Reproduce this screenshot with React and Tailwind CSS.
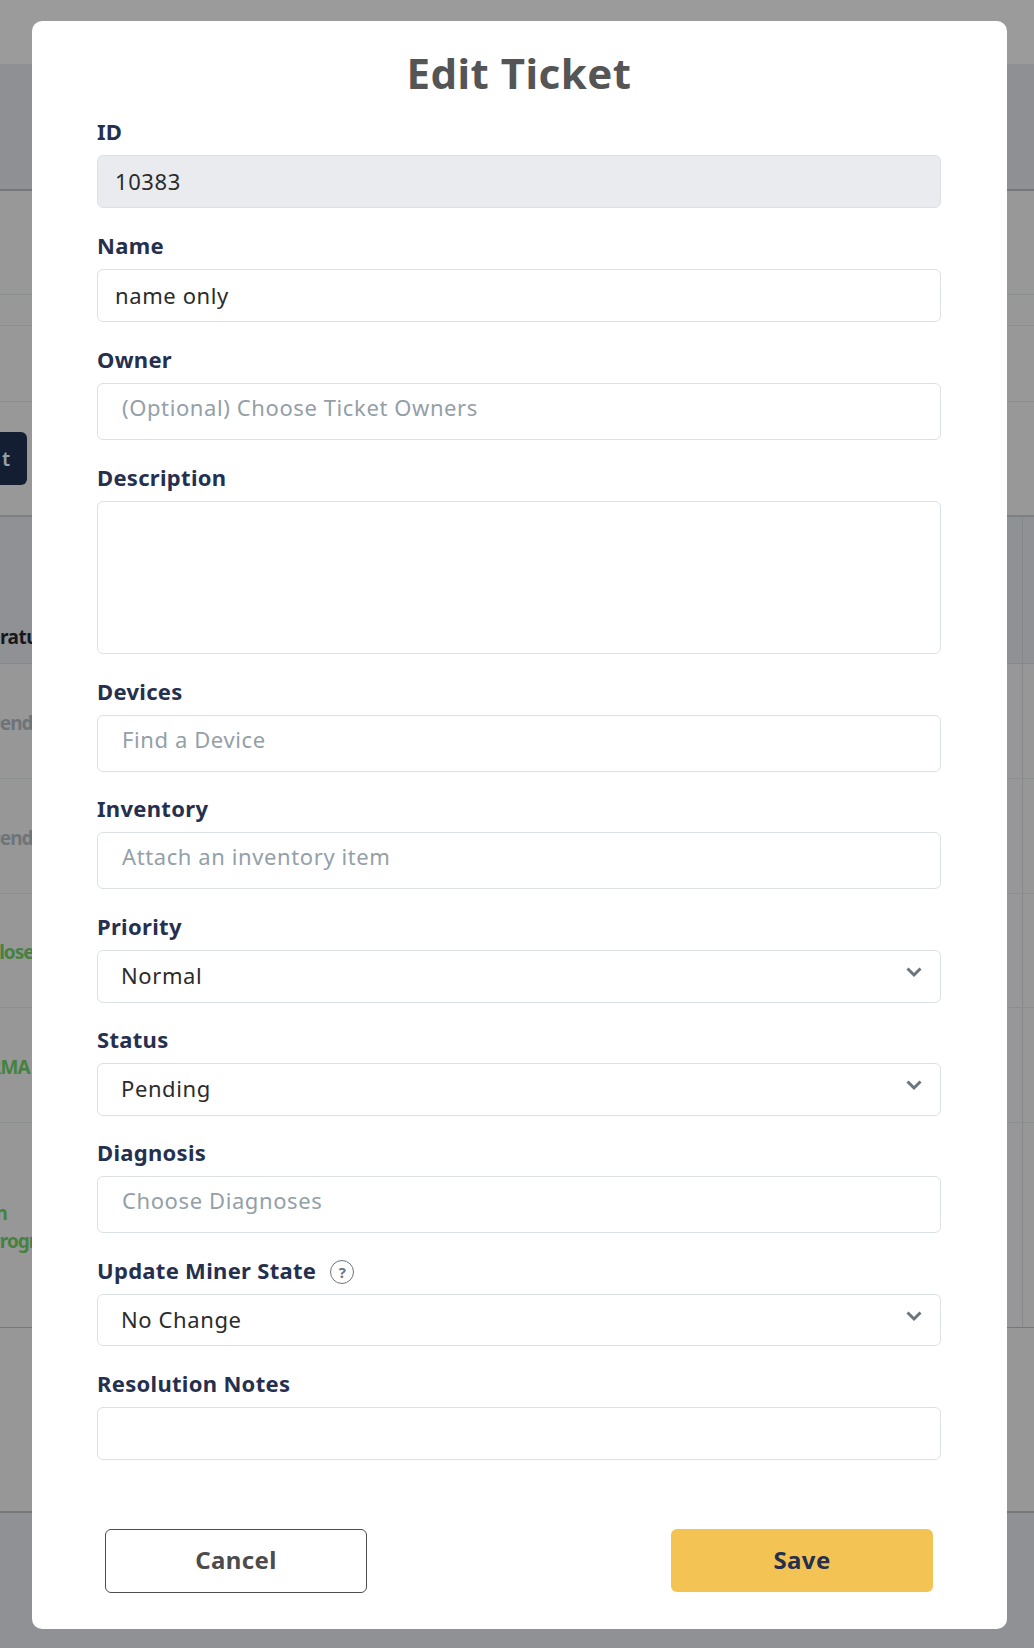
const boxCls = "w-full rounded-[6px] border border-[#dbe2e6] text-[22px] tracking-[0.6px]";

function Field({ label, value, placeholder, h, mt, gray, select, help, textCls = "pl-[17px]", valueCls = "mb-[2px]" }) {
  return (
    <div className={mt}>
      <label className="flex items-center h-[24px] text-[22px] leading-[24px] font-bold tracking-[0.3px] text-[#25304f]">
        {label}
        {help && (
          <span className="ml-[14px] mt-[4px] flex h-[24px] w-[24px] items-center justify-center rounded-full border border-[#6c757d] text-[15px] font-bold tracking-normal text-[#6c757d]">?</span>
        )}
      </label>
      <div className={`${boxCls} ${h} ${gray ? "bg-[#e9ebef]" : "bg-white"} mt-[12px] relative flex items-center ${textCls}`}>
        {value && <span className={`text-[#2b2b2b] ${valueCls}`}>{value}</span>}
        {placeholder && <span className="-mt-[8px] text-[#93a0a8]">{placeholder}</span>}
        {select && (
          <svg className="absolute right-[18px] top-[15px]" width="16" height="12" viewBox="0 0 16 12" fill="none">
            <path d="M1.5 2.5 L8 9 L14.5 2.5" stroke="#6c757d" strokeWidth="3" />
          </svg>
        )}
      </div>
    </div>
  );
}

function Row({ h, children, cls = "", line = "border-[#8a8e8c]" }) {
  return (
    <div className={`flex ${h} border-b ${line} ${cls}`}>
      <div className="flex flex-1 flex-col justify-center pt-[3px] text-[19px] leading-[28px] font-bold tracking-[-1px] whitespace-nowrap">{children}</div>
      <div className="w-[12px] border-l border-[#84888a]" />
    </div>
  );
}

export default function App() {
  return (
    <div className="relative w-[1034px] h-[1648px] overflow-hidden bg-[#8f9194] font-['Noto_Sans','Liberation_Sans',sans-serif]">
      <div className="h-[64px] bg-[#9b9b9b]" />
      <div className="h-[127px] border-b-2 border-[#74787d] bg-[#8e9093]" />
      <div className="h-[104px] border-b border-[#8a8e8c] bg-[#989898]" />
      <div className="h-[31px] border-b border-[#8a8e8c] bg-[#989898]" />
      <div className="h-[76px] border-b border-[#8a8e8c] bg-[#989898]" />
      <div className="flex h-[115px] items-start border-b-2 border-[#7c8084] bg-[#989898] pt-[30px]">
        <div className="flex h-[53px] w-[27px] items-center justify-end rounded-r-[6px] bg-[#141e33] pr-[17px] text-[20px] font-semibold text-[#98a0a8]">t</div>
      </div>
      <div className="flex h-[147px] items-end border-b border-[#85898b] bg-[#8f9194]">
        <div className="flex-1 pb-[12px] text-[19px] font-bold tracking-[-0.5px] text-[#15181c] whitespace-nowrap">ratu</div>
        <div className="h-full w-[12px] border-l border-[#84888a]" />
      </div>
      <Row h="h-[115px]" cls="bg-[#979797] text-[#6e7478]"><span className="-ml-[11px]">Pending</span></Row>
      <Row h="h-[115px]" cls="bg-[#979797] text-[#6e7478]"><span className="-ml-[11px]">Pending</span></Row>
      <Row h="h-[114px]" cls="bg-[#979797] text-[#45823f]"><span className="-ml-[12px]">Closed</span></Row>
      <Row h="h-[115px]" cls="bg-[#979797] text-[#45823f]"><span className="-ml-[11px]">RMA</span></Row>
      <Row h="h-[205px]" line="border-[#74787d]" cls="bg-[#979797] text-[#45823f]">
        <span className="-ml-[11px]">In</span>
        <span className="-ml-[11px]">Progress</span>
      </Row>
      <div className="h-[185px] border-b-2 border-[#74787d] bg-[#979797]" />

      <div className="absolute left-[32px] top-[21px] h-[1608px] w-[975px] rounded-[10px] bg-white pl-[65px] pr-[66px] pt-[27px]">
        <h1 className="text-center text-[42px] leading-[50px] font-bold tracking-[0.5px] text-[#555555]">Edit Ticket</h1>
        <Field label="ID" value="10383" valueCls="" gray h="h-[53px]" mt="mt-[21px]" />
        <Field label="Name" value="name only" valueCls="" h="h-[53px]" mt="mt-[25px]" />
        <Field label="Owner" placeholder="(Optional) Choose Ticket Owners" h="h-[57px]" mt="mt-[25px]" textCls="pl-[24px]" />
        <Field label="Description" h="h-[153px]" mt="mt-[25px]" />
        <Field label="Devices" placeholder="Find a Device" h="h-[57px]" mt="mt-[25px]" textCls="pl-[24px]" />
        <Field label="Inventory" placeholder="Attach an inventory item" h="h-[57px]" mt="mt-[24px]" textCls="pl-[24px]" />
        <Field label="Priority" value="Normal" select h="h-[53px]" mt="mt-[25px]" textCls="pl-[23px]" />
        <Field label="Status" value="Pending" select h="h-[53px]" mt="mt-[24px]" textCls="pl-[23px]" />
        <Field label="Diagnosis" placeholder="Choose Diagnoses" h="h-[57px]" mt="mt-[24px]" textCls="pl-[24px]" />
        <Field label="Update Miner State" help value="No Change" select h="h-[52px]" mt="mt-[25px]" textCls="pl-[23px]" />
        <Field label="Resolution Notes" h="h-[53px]" mt="mt-[25px]" />
        <div className="mt-[69px] flex justify-between pl-[8px] pr-[8px]">
          <button className="h-[64px] w-[262px] rounded-[6px] border border-[#4c4c4c] bg-white pb-[3px] text-[24px] font-bold tracking-[0.4px] text-[#4c4c4c]">Cancel</button>
          <button className="h-[63px] w-[262px] rounded-[6px] bg-[#f3c454] pb-[1px] text-[24px] font-bold tracking-[0.4px] text-[#25304f]">Save</button>
        </div>
      </div>
    </div>
  );
}
